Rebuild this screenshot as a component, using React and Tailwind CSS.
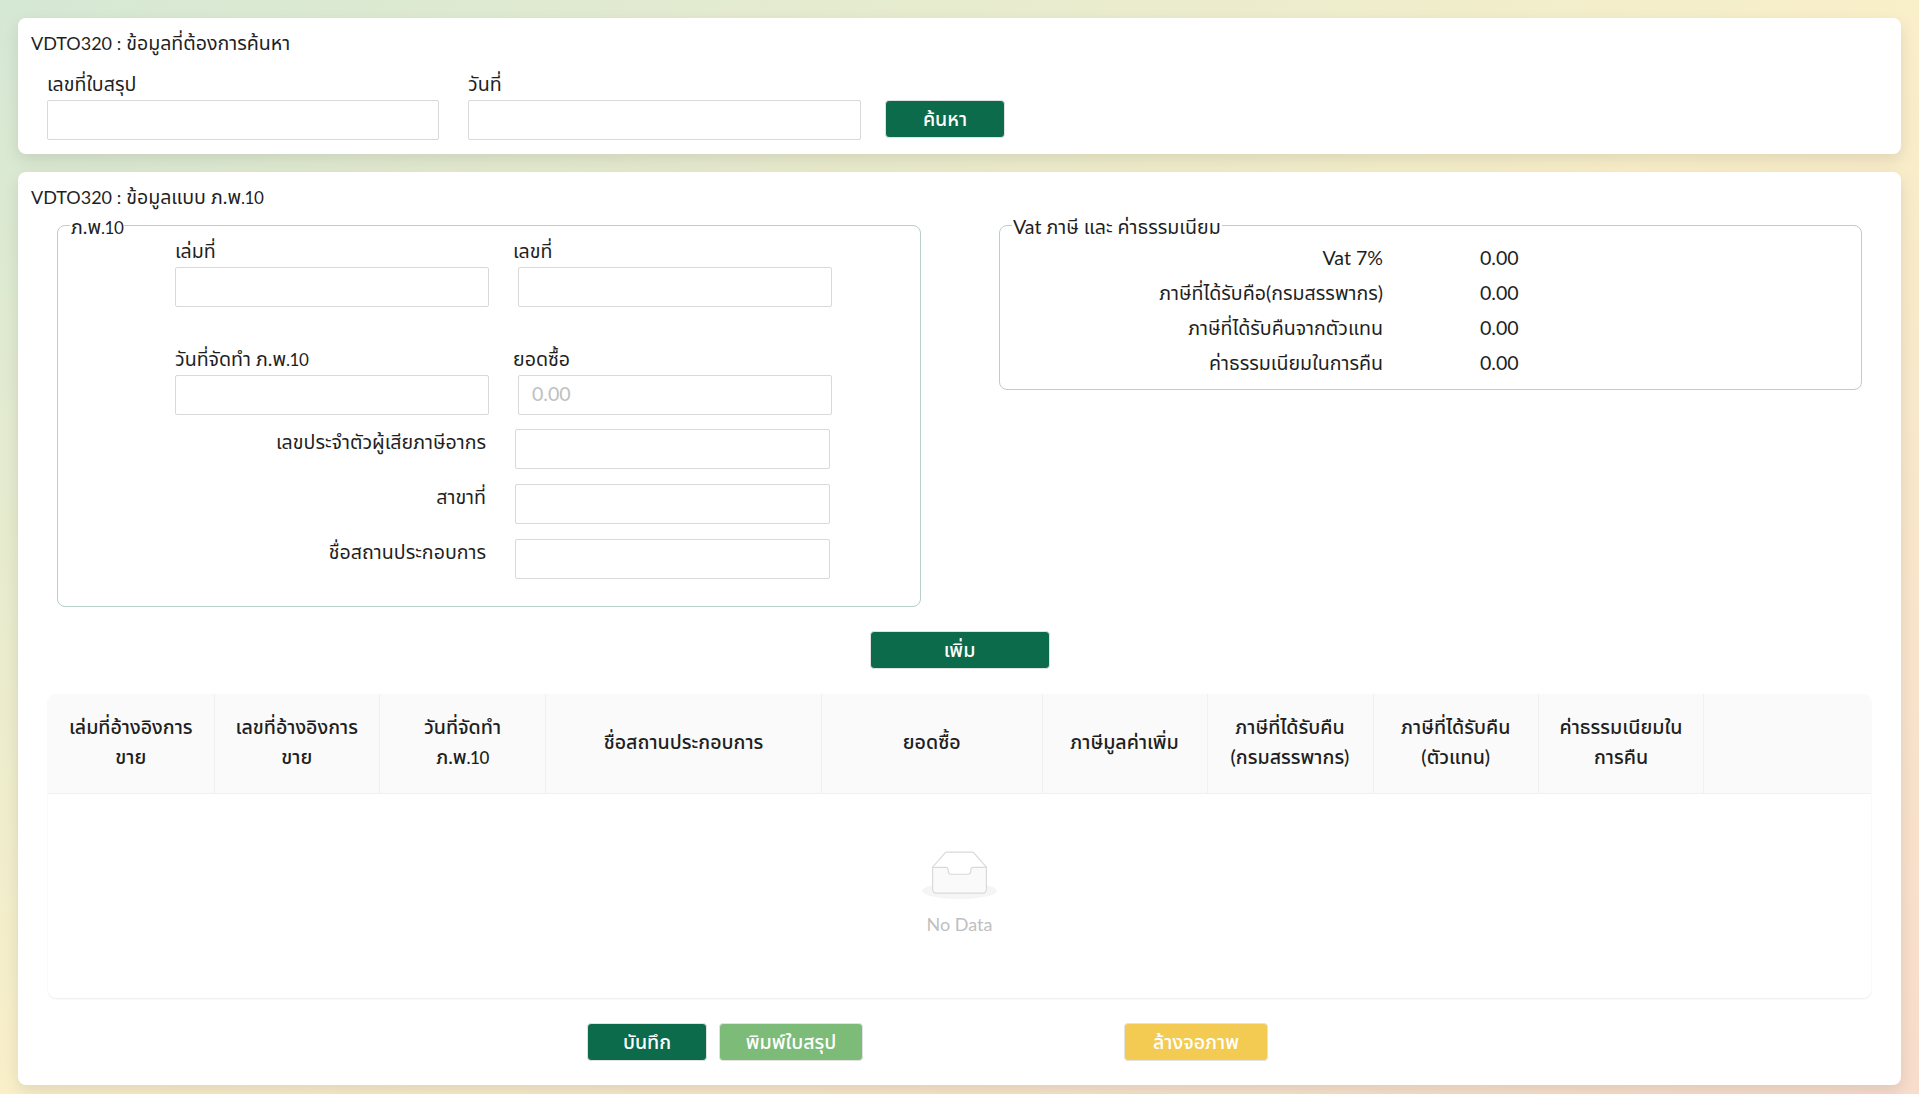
import React from "react";

const F = "[font-family:'Lato','Noto_Sans_Thai','Noto_Sans','Liberation_Sans',sans-serif]";

function Input({ className = "", placeholder }) {
  return (
    <input
      readOnly
      placeholder={placeholder}
      className={`h-[40px] border border-[#d9d9d9] rounded-[2px] bg-white px-[13px] pb-[3px] text-[19.6px] placeholder:text-[#bfbfbf] outline-none ${className}`}
    />
  );
}

function Btn({ children, className = "" }) {
  return (
    <button className={`h-[38px] rounded-[4px] text-white text-[19.6px] font-medium flex items-center justify-center border border-[#e2e2e2] ${className}`}>
      {children}
    </button>
  );
}

function Legend({ children }) {
  return <legend className="ml-[12px] px-[1px] text-[19.6px] leading-[10px] h-[6px] text-[#1f1f1f]">{children}</legend>;
}

function Pw() {
  return <>ภ.พ<span className="text-[17px] tracking-[-0.5px]">.10</span></>;
}

const cols = [
  [<>เล่มที่อ้างอิงการขาย</>, "w-[166.5px]"],
  [<>เลขที่อ้างอิงการขาย</>, "w-[165.5px]"],
  [<>วันที่จัดทำ <Pw /></>, "w-[166px]"],
  [<>ชื่อสถานประกอบการ</>, "w-[276px]"],
  [<>ยอดซื้อ</>, "w-[220.5px]"],
  [<>ภาษีมูลค่าเพิ่ม</>, "w-[165px]"],
  [<>ภาษีที่ได้รับคืน (กรมสรรพากร)</>, "w-[166px]"],
  [<>ภาษีที่ได้รับคืน (ตัวแทน)</>, "w-[165.5px]"],
  [<>ค่าธรรมเนียมในการคืน</>, "w-[165px]"],
  [null, "flex-1"],
];

const vat = [
  ["Vat 7%", "0.00"],
  ["ภาษีที่ได้รับคือ(กรมสรรพากร)", "0.00"],
  ["ภาษีที่ได้รับคืนจากตัวแทน", "0.00"],
  ["ค่าธรรมเนียมในการคืน", "0.00"],
];

function EmptyIcon() {
  return (
    <svg width="75" height="48" viewBox="0 0 64 41">
      <g transform="translate(0 1)" fill="none" fillRule="evenodd">
        <ellipse fill="#f5f5f5" cx="32" cy="33" rx="32" ry="7" />
        <g fillRule="nonzero" stroke="#d9d9d9">
          <path d="M55 12.76L44.854 1.258C44.367.474 43.656 0 42.907 0H21.093c-.749 0-1.46.474-1.947 1.257L9 12.761V22h46v-9.24z" />
          <path d="M41.613 15.931c0-1.605.994-2.93 2.227-2.931H55v18.137C55 33.26 53.68 35 52.05 35h-40.1C10.32 35 9 33.259 9 31.137V13h11.16c1.233 0 2.227 1.323 2.227 2.928v.022c0 1.605 1.005 2.901 2.237 2.901h14.752c1.232 0 2.237-1.308 2.237-2.913v-.007z" fill="#fafafa" />
        </g>
      </g>
    </svg>
  );
}

export default function App() {
  return (
    <div className={`${F} w-full h-[1094px] overflow-hidden bg-[linear-gradient(to_bottom_right,#d5e8d4,#f9efc9,#f8dccc)] px-[18px] pt-[18px] text-[19.6px] text-[#1f1f1f] flex flex-col gap-[18px]`}>
      {/* search */}
      <section className="h-[136px] bg-white rounded-[8px] shadow-[0_6px_16px_rgba(0,0,0,0.1)] pl-[13px] pt-[12px]">
        <h2 className="leading-[26px]"><span className="text-[18px]">VDTO320 :</span> ข้อมูลที่ต้องการค้นหา</h2>
        <div className="mt-[16px] ml-[16px] flex items-start">
          <div className="w-[392px] flex flex-col">
            <label className="leading-[24px] h-[28px]">เลขที่ใบสรุป</label>
            <Input className="w-full" />
          </div>
          <div className="w-[393px] ml-[29px] flex flex-col">
            <label className="leading-[24px] h-[28px]">วันที่</label>
            <Input className="w-full" />
          </div>
          <Btn className="mt-[28px] ml-[24px] w-[120px] bg-[#0b6b4b]">ค้นหา</Btn>
        </div>
      </section>

      {/* form */}
      <section className="flex-1 mb-[9px] bg-white rounded-[8px] shadow-[0_6px_16px_rgba(0,0,0,0.1)] pt-[12px]">
        <h2 className="pl-[13px] leading-[26px]"><span className="text-[18px]">VDTO320 :</span> ข้อมูลแบบ <Pw /></h2>

        <div className="mt-[11px] flex items-start">
          <fieldset className="ml-[39px] w-[864px] h-[385px] border border-[#b9cfca] rounded-[8px]">
            <Legend><Pw /></Legend>
            <div className="pl-[117px]">
              <div className="flex mt-[11px]">
                <div className="w-[338px] flex flex-col">
                  <label className="leading-[24px] h-[28px]">เล่มที่</label>
                  <Input className="w-[314px]" />
                </div>
                <div className="flex flex-col">
                  <label className="leading-[24px] h-[28px]">เลขที่</label>
                  <Input className="w-[314px] ml-[5px]" />
                </div>
              </div>
              <div className="flex mt-[40px]">
                <div className="w-[338px] flex flex-col">
                  <label className="leading-[24px] h-[28px]">วันที่จัดทำ <Pw /></label>
                  <Input className="w-[314px]" />
                </div>
                <div className="flex flex-col">
                  <label className="leading-[24px] h-[28px]">ยอดซื้อ</label>
                  <Input className="w-[314px] ml-[5px]" placeholder="0.00" />
                </div>
              </div>
              {[
                ["เลขประจำตัวผู้เสียภาษีอากร", "mt-[14px]"],
                ["สาขาที่", "mt-[15px]"],
                ["ชื่อสถานประกอบการ", "mt-[15px]"],
              ].map(([t, m]) => (
                <div key={t} className={`flex items-start ${m}`}>
                  <label className="w-[311px] text-right leading-[26px]">{t}</label>
                  <Input className="w-[315px] ml-[29px]" />
                </div>
              ))}
            </div>
          </fieldset>

          <fieldset className="ml-[78px] w-[863px] h-[168px] border border-[#b9cfca] rounded-[8px]">
            <Legend>Vat ภาษี และ ค่าธรรมเนียม</Legend>
            <div className="mt-[16px] flex flex-col gap-[7px]">
              {vat.map(([l, v]) => (
                <div key={l} className="flex h-[28px] leading-[28px]">
                  <span className="w-[383px] text-right">{l}</span>
                  <span className="ml-[97px]">{v}</span>
                </div>
              ))}
            </div>
          </fieldset>
        </div>

        <div className="mt-[24px] flex justify-center">
          <Btn className="w-[180px] bg-[#0b6b4b]">เพิ่ม</Btn>
        </div>

        {/* table */}
        <div className="mt-[25px] mx-[30px] h-[304px] rounded-[8px] shadow-[0_1px_2px_rgba(0,0,0,0.08)] flex flex-col">
          <div className="h-[100px] flex bg-[#fafafa] border-b border-[#f0f0f0] rounded-t-[8px] font-medium">
            {cols.map(([t, w], i) => (
              <div
                key={i}
                className={`${w} flex items-center justify-center text-center leading-[30px] px-[16px] pb-[3px] ${i < cols.length - 1 ? "border-r border-[#f0f0f0]" : ""}`}
              >
                <span>{t}</span>
              </div>
            ))}
          </div>
          <div className="flex-1 flex flex-col items-center pt-[57px]">
            <EmptyIcon />
            <div className="mt-[13px] text-[#bfbfbf] text-[18px] leading-[24px]">No Data</div>
          </div>
        </div>

        <div className="mt-[25px] flex ml-[569px]">
          <Btn className="w-[120px] bg-[#0b6b4b]">บันทึก</Btn>
          <Btn className="w-[144px] ml-[12px] bg-[#7cbb78]">พิมพ์ใบสรุป</Btn>
          <Btn className="w-[144px] ml-[261px] bg-[#f3cb52]">ล้างจอภาพ</Btn>
        </div>
      </section>
    </div>
  );
}
